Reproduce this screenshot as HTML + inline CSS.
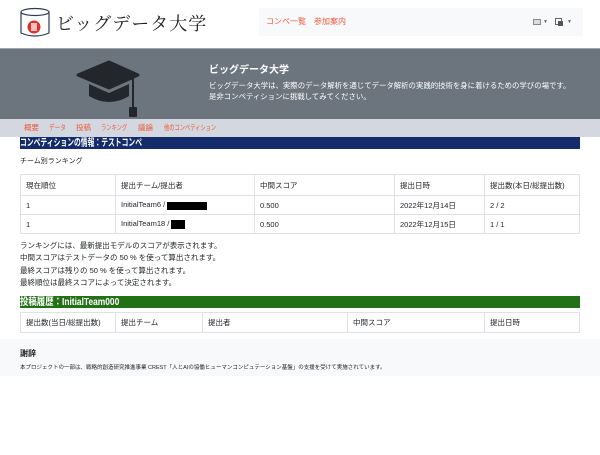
<!DOCTYPE html>
<html><head><meta charset="utf-8"><style>
*{margin:0;padding:0;box-sizing:border-box}
body{width:600px;height:455px;background:#fff;font-family:"Liberation Sans","Noto Sans CJK JP",sans-serif;color:#212529;position:relative;overflow:hidden}
.a{position:absolute;white-space:nowrap}
.o{color:#ee5a3a}
table{position:absolute;border-collapse:collapse;font-size:7.5px}
td{border:1px solid #dee2e6;padding:0 5px;vertical-align:middle}
.n{font-size:7.5px;line-height:12.4px}
.bar{line-height:10px;padding-top:2px}
.bar span{display:inline-block;transform-origin:0 0}
.sn{top:123px;font-size:7.5px;line-height:10px;transform-origin:0 0}
</style></head><body>
<svg class="a" style="left:18px;top:6px" width="34" height="32" viewBox="0 0 34 32">
<path d="M3 6 V27 Q17 33 31 27 V6" fill="#fff" stroke="#2c3e55" stroke-width="1.2"/>
<ellipse cx="17" cy="6" rx="14" ry="3.5" fill="#fff" stroke="#2c3e55" stroke-width="1.2"/>
<circle cx="16" cy="21" r="6.5" fill="#e0312a"/>
<rect x="13" y="17" width="6" height="8" fill="#fff" opacity=".7"/>
</svg>
<div class="a" style="left:56px;top:10px;font-size:18px;color:#222;letter-spacing:1px;font-family:'Noto Serif CJK SC',serif">ビッグデータ大学</div>
<div class="a" style="left:259px;top:8px;width:324px;height:28px;background:#f8f9fa"></div>
<div class="a o" style="left:266px;top:16px;font-size:8px;line-height:12px">コンペ一覧</div>
<div class="a o" style="left:314px;top:16px;font-size:8px;line-height:12px">参加案内</div>
<div class="a" style="left:533px;top:19px;width:8px;height:6px;border:1px solid #888;background:#ddd"></div>
<div class="a" style="left:543px;top:19px;font-size:5px;color:#666">▼</div>
<div class="a" style="left:555px;top:18px;width:7px;height:7px;border:1px solid #666"></div>
<div class="a" style="left:558px;top:21px;width:5px;height:5px;background:#555"></div>
<div class="a" style="left:567px;top:19px;font-size:5px;color:#666">▼</div>
<div class="a" style="left:0;top:48px;width:600px;height:71px;background:#6c757d;border-top:1px solid #a0a6ab"></div>
<svg class="a" style="left:76px;top:60px" width="66" height="58" viewBox="0 0 66 58">
<path d="M33 2 L62 15 L33 28 L2 15 Z" fill="#23272b" stroke="#23272b" stroke-linejoin="round" stroke-width="3"/>
<path d="M13 24 V36 Q33 48 53 36 V24 L33 33 Z" fill="#23272b"/>
<path d="M33 15 L57 19 V48" stroke="#23272b" stroke-width="2" fill="none"/>
<rect x="53" y="47" width="8" height="10" rx="1" fill="#23272b"/>
</svg>
<div class="a" style="left:209px;top:64px;font-size:10px;line-height:13px;font-weight:bold;color:#fff">ビッグデータ大学</div>
<div class="a" style="left:209px;top:80px;font-size:7.4px;line-height:11px;color:#fff;white-space:normal;width:362px">ビッグデータ大学は、実際のデータ解析を通じてデータ解析の実践的技術を身に着けるための学びの場です。是非コンペティションに挑戦してみてください。</div>
<div class="a" style="left:0;top:119px;width:600px;height:18px;background:#d3d8e0"></div>
<div class="a o sn" style="left:24px">概要</div>
<div class="a o sn" style="left:49px;transform:scaleX(.75)">データ</div>
<div class="a o sn" style="left:76px">投稿</div>
<div class="a o sn" style="left:101px;transform:scaleX(.7)">ランキング</div>
<div class="a o sn" style="left:138px">議論</div>
<div class="a o sn" style="left:164px;transform:scaleX(.7)">他のコンペティション</div>
<div class="a bar" style="left:20px;top:137px;width:560px;height:12px;background:#142c6b;color:#fff;font-size:10px;font-weight:bold"><span style="transform:scaleX(.68)">コンペティションの情報：テストコンペ</span></div>
<div class="a" style="left:20px;top:156px;font-size:7px">チーム別ランキング</div>
<table style="left:20px;top:174px;width:560px">
<tr style="height:21px"><td style="width:95px">現在順位</td><td style="width:139px">提出チーム/提出者</td><td style="width:140px">中間スコア</td><td style="width:90px">提出日時</td><td>提出数(本日/総提出数)</td></tr>
<tr style="height:19px"><td>1</td><td>InitialTeam6 / <span style="display:inline-block;width:40px;height:8px;background:#000;vertical-align:middle"></span></td><td>0.500</td><td>2022年12月14日</td><td>2 / 2</td></tr>
<tr style="height:19px"><td>1</td><td>InitialTeam18 / <span style="display:inline-block;width:14px;height:9px;background:#000;vertical-align:middle"></span></td><td>0.500</td><td>2022年12月15日</td><td>1 / 1</td></tr>
</table>
<div class="a n" style="left:20px;top:240px">ランキングには、最新提出モデルのスコアが表示されます。<br>中間スコアはテストデータの 50 % を使って算出されます。<br>最終スコアは残りの 50 % を使って算出されます。<br>最終順位は最終スコアによって決定されます。</div>
<div class="a bar" style="left:20px;top:296px;width:560px;height:12px;background:#237116;color:#fff;font-size:10px;font-weight:bold"><span style="transform:scaleX(.84)">投稿履歴：InitialTeam000</span></div>
<table style="left:20px;top:312px;width:560px">
<tr style="height:20px"><td style="width:95px">提出数(当日/総提出数)</td><td style="width:87px">提出チーム</td><td style="width:145px">提出者</td><td style="width:137px">中間スコア</td><td>提出日時</td></tr>
</table>
<div class="a" style="left:0;top:339px;width:600px;height:37px;background:#f8f9fa"></div>
<div class="a" style="left:20px;top:348px;font-size:8px;font-weight:bold">謝辞</div>
<div class="a" style="left:20px;top:363px;font-size:5.5px">本プロジェクトの一部は、戦略的創造研究推進事業 CREST「人とAIの協働ヒューマンコンピュテーション基盤」の支援を受けて実施されています。</div>
</body></html>
